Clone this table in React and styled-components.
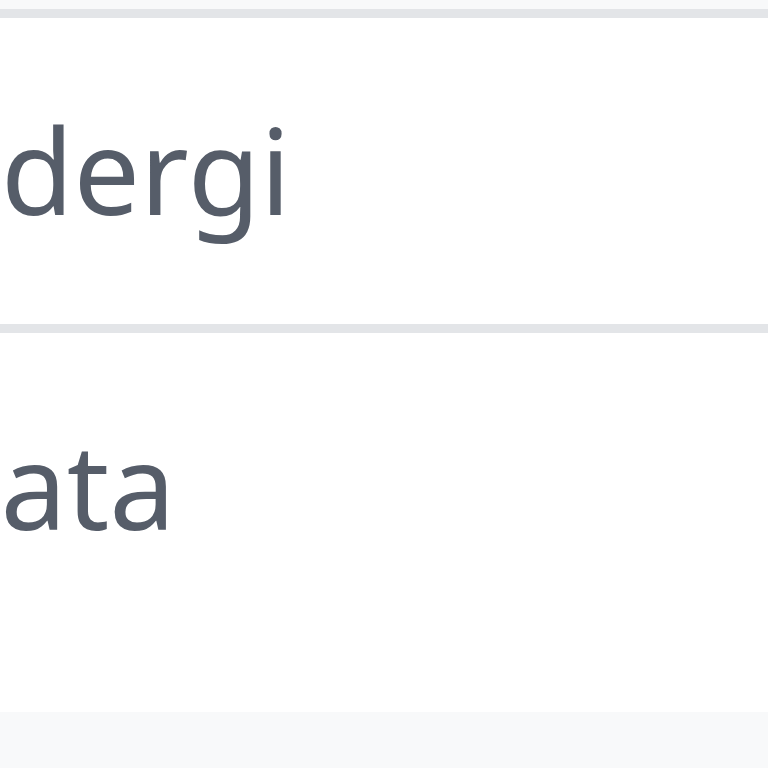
import React from "react";
import styled, { createGlobalStyle } from "styled-components";

const GlobalStyle = createGlobalStyle`
  html, body {
    margin: 0;
    padding: 0;
    background: #f8f9fa;
    overflow: hidden;
  }
`;

const Page = styled.div`
  width: 768px;
  height: 768px;
  padding-top: 9px;
  box-sizing: border-box;
  background: #f8f9fa;
  overflow: hidden;
`;

const Table = styled.div`
  display: flex;
  flex-direction: column;
  background: #ffffff;
`;

const Row = styled.div`
  border-top: 9px solid #e3e5e8;
  padding: 80px 0 ${(p) => p.$bottom}px;
  overflow: hidden;
`;

const Cell = styled.span`
  display: block;
  margin-left: ${(p) => p.$shift}px;
  font-family: "Noto Sans", Lato, sans-serif;
  font-size: 118px;
  line-height: 144px;
  color: #565d69;
  white-space: nowrap;
`;

const rows = [
  { text: "dergi", shift: 1, bottom: 82 },
  { text: "data", shift: -72, bottom: 155 },
];

function App() {
  return (
    <>
      <GlobalStyle />
      <Page>
        <Table>
          {rows.map((r) => (
            <Row key={r.text} $bottom={r.bottom}>
              <Cell $shift={r.shift}>{r.text}</Cell>
            </Row>
          ))}
        </Table>
      </Page>
    </>
  );
}

export default App;
